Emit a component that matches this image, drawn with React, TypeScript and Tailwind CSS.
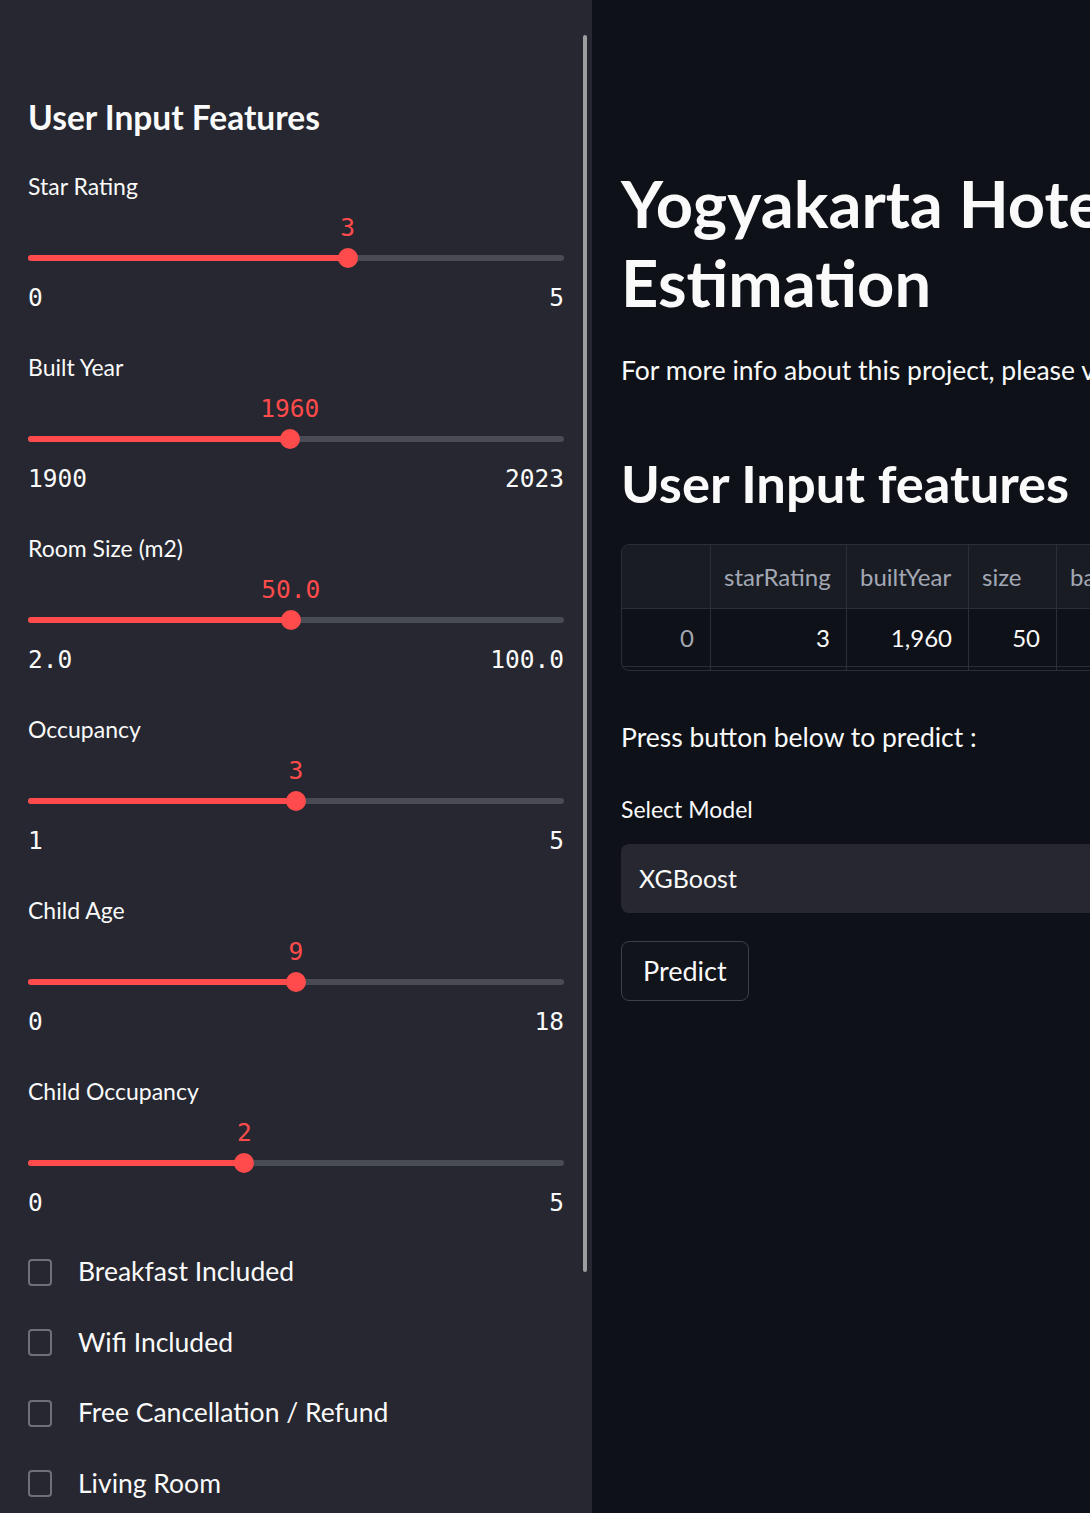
import React from "react"

const sans = "font-['Lato','Noto_Sans',sans-serif]"
const mono = "font-['DejaVu_Sans_Mono','Liberation_Mono',monospace]"

interface SliderProps {
    label: string
    value: string
    min: string
    max: string
    frac: number
}

function Slider({ label, value, min, max, frac }: SliderProps) {
    const left = `calc(10px + ${frac} * (100% - 20px))`
    return (
        <div className="flex flex-col">
            <div className={`${sans} text-[23px] leading-[28px] text-[#fafafa]`}>{label}</div>
            <div className="relative mt-[14px] h-[28px]">
                <span
                    className={`${mono} absolute top-0 -translate-x-1/2 text-[24.5px] leading-[28px] text-[#ff4b4b]`}
                    style={{ left }}
                >
                    {value}
                </span>
            </div>
            <div className="relative mt-[6px] h-[20px]">
                <div className="absolute left-0 right-0 top-[7px] h-[6px] rounded-full bg-[#4a4c55]" />
                <div
                    className="absolute left-0 top-[7px] h-[6px] rounded-full bg-[#ff4b4b]"
                    style={{ width: left }}
                />
                <div
                    className="absolute top-0 h-[20px] w-[20px] -translate-x-1/2 rounded-full bg-[#ff4b4b]"
                    style={{ left }}
                />
            </div>
            <div className={`${mono} mt-[16px] flex justify-between text-[24.5px] leading-[28px] text-[#fafafa]`}>
                <span>{min}</span>
                <span>{max}</span>
            </div>
        </div>
    )
}

function Checkbox({ label }: { label: string }) {
    return (
        <div className="flex h-[70.5px] items-center gap-[26px]">
            <div className="h-[27px] w-[24px] rounded-[4px] border-2 border-[#6e7079]" />
            <span className={`${sans} text-[26.5px] text-[#fafafa]`}>{label}</span>
        </div>
    )
}

const sliders: SliderProps[] = [
    { label: "Star Rating", value: "3", min: "0", max: "5", frac: 0.6 },
    { label: "Built Year", value: "1960", min: "1900", max: "2023", frac: 60 / 123 },
    { label: "Room Size (m2)", value: "50.0", min: "2.0", max: "100.0", frac: 48 / 98 },
    { label: "Occupancy", value: "3", min: "1", max: "5", frac: 0.5 },
    { label: "Child Age", value: "9", min: "0", max: "18", frac: 0.5 },
    { label: "Child Occupancy", value: "2", min: "0", max: "5", frac: 0.4 },
]

const columns = [
    { name: "", value: "0", w: "w-[89px]", muted: true },
    { name: "starRating", value: "3", w: "w-[136px]" },
    { name: "builtYear", value: "1,960", w: "w-[122px]" },
    { name: "size", value: "50", w: "w-[88px]" },
    { name: "bathroom", value: "1", w: "w-[130px]" },
    { name: "breakfast", value: "0", w: "w-[130px]" },
]

export default function App() {
    return (
        <div className="flex h-[1513px] w-[1090px] overflow-hidden bg-[#0e1117]">
            <aside className="relative w-[592px] shrink-0 bg-[#262730] px-[28px] pt-[97px]">
                <div className="absolute left-[583px] top-[35px] h-[1237px] w-[4px] rounded-full bg-[#9e9ea0]" />
                <h2 className={`${sans} text-[33.5px] font-bold leading-[40px] text-[#fafafa]`}>User Input Features</h2>
                <div className="mt-[35px] flex flex-col gap-[41px]">
                    {sliders.map((s) => (
                        <Slider key={s.label} {...s} />
                    ))}
                </div>
                <div className="mt-[20px] flex flex-col">
                    <Checkbox label="Breakfast Included" />
                    <Checkbox label="Wifi Included" />
                    <Checkbox label="Free Cancellation / Refund" />
                    <Checkbox label="Living Room" />
                </div>
            </aside>

            <main className={`${sans} min-w-0 flex-1 overflow-hidden pl-[29px] pt-[164px] text-[#fafafa]`}>
                <div className="w-[760px]">
                    <h1 className="text-[65px] font-bold leading-[79px]">
                        Yogyakarta Hotel Price
                        <br />
                        Estimation
                    </h1>
                    <p className="mt-[30px] text-[26.5px] leading-[36px]">
                        For more info about this project, please visit the repository.
                    </p>
                    <h2 className="mt-[63px] text-[52.5px] font-bold leading-[64px]">User Input features</h2>

                    <div className="mt-[29px] overflow-hidden rounded-lg border border-[#2b2e38]">
                        <div className="flex h-[63px] bg-[#1a1c24]">
                            {columns.map((c, i) => (
                                <div
                                    key={i}
                                    className={`${c.w} flex shrink-0 items-center border-r border-[#2b2e38] px-[13px] text-[24px] text-[#a3a8b4]`}
                                >
                                    {c.name}
                                </div>
                            ))}
                        </div>
                        <div className="flex h-[59px] border-t border-b border-[#2b2e38]">
                            {columns.map((c, i) => (
                                <div
                                    key={i}
                                    className={`${c.w} flex shrink-0 items-center justify-end border-r border-[#2b2e38] px-[16px] text-[24px] ${c.muted ? "text-[#a3a8b4]" : "text-[#fafafa]"}`}
                                >
                                    {c.value}
                                </div>
                            ))}
                        </div>
                        <div className="flex h-[3px]">
                            {columns.map((c, i) => (
                                <div key={i} className={`${c.w} shrink-0 border-r border-[#2b2e38]`} />
                            ))}
                        </div>
                    </div>

                    <p className="mt-[48px] text-[26.5px] leading-[36px]">Press button below to predict :</p>
                    <div className="mt-[40px] text-[23px] leading-[28px]">Select Model</div>
                    <div className="mt-[21px] flex h-[69px] items-center rounded-lg bg-[#262730] px-[18px] text-[25px]">
                        XGBoost
                    </div>
                    <button className="mt-[28px] h-[60px] rounded-lg border border-[#3d404a] bg-[#12141b] px-[21px] text-[27px] text-[#fafafa]">
                        Predict
                    </button>
                </div>
            </main>
        </div>
    )
}
